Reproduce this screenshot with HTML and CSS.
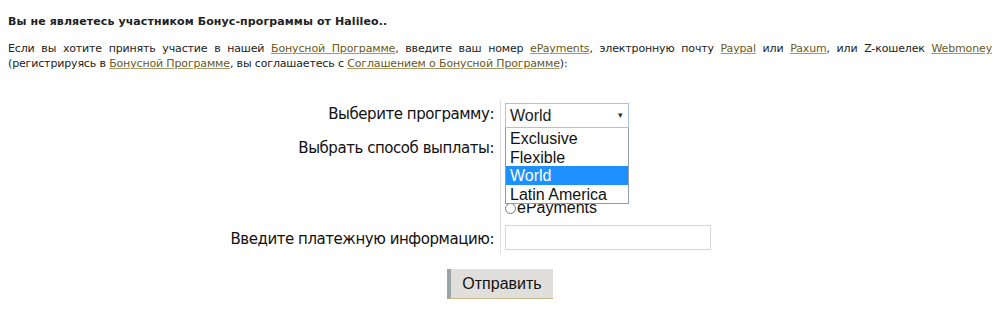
FILE: index.html
```html
<!DOCTYPE html>
<html lang="ru">

<head>
    <meta charset="UTF-8">
    <title>Бонус-программа</title>
    <link rel="stylesheet" href="styles.css">
</head>

<body>
    <h3 class="title">Вы не являетесь участником Бонус-программы от Halileo..</h3>

    <p class="intro">Если вы хотите принять участие в нашей <a href="#">Бонусной Программе</a>, введите ваш номер
        <a href="#">ePayments</a>, электронную почту <a href="#">Paypal</a> или <a href="#">Paxum</a>, или Z-кошелек
        <a href="#">Webmoney</a> (регистрируясь в <a href="#">Бонусной Программе</a>, вы соглашаетесь с
        <a href="#">Соглашением о Бонусной Программе</a>):</p>

    <form class="bonus-form">
        <div class="form-table">
            <label class="cell-label row-program" for="program">Выберите программу:</label>
            <div class="cell-field row-program">
                <div class="select-wrap">
                    <div class="fake-select" id="program">World<span class="arrow">▾</span></div>
                    <ul class="dropdown">
                        <li>Exclusive</li>
                        <li>Flexible</li>
                        <li class="selected">World</li>
                        <li>Latin America</li>
                    </ul>
                </div>
            </div>

            <div class="cell-label row-method">Выбрать способ выплаты:</div>
            <div class="cell-field row-method">
                <label class="radio"><input type="radio" name="method">ePayments</label>
            </div>

            <label class="cell-label row-info" for="info">Введите платежную информацию:</label>
            <div class="cell-field row-info">
                <input type="text" id="info" class="text-input">
            </div>
        </div>

        <div class="actions">
            <button type="submit">Отправить</button>
        </div>
    </form>
</body>

</html>
```

FILE: styles.css
```css
body {
    margin: 8px;
    font-family: Tahoma, "DejaVu Sans", sans-serif;
    color: #222;
    background: white;
}

.title {
    font-size: 11px;
    font-weight: bold;
    letter-spacing: 0.1px;
    margin: 6px 0 0;
    line-height: 15px;
}

.intro {
    font-size: 11px;
    letter-spacing: -0.15px;
    line-height: 15px;
    text-align: justify;
    margin: 12px 0 0;
}

.intro a {
    color: #6b5a22;
    text-decoration-color: #a89868;
}

.bonus-form {
    margin-top: 29px;
    font-size: 16px;
}

.form-table {
    display: grid;
    grid-template-columns: 1fr 1fr;
}

.cell-label {
    text-align: right;
    padding-right: 6px;
    font-size: 15px;
    letter-spacing: -0.45px;
    color: #111;
}

.cell-field {
    border-left: 1px solid #dcdcdc;
    padding-left: 4px;
}

.row-program {
    padding-top: 3px;
    height: 28px;
}

.cell-label.row-program {
    padding-top: 5px;
    height: 26px;
}

.cell-field.row-method {
    padding-top: 67px;
    height: 27px;
}

.cell-label.row-method {
    padding-top: 8px;
    height: 86px;
}

.row-info {
    height: 29px;
}

.cell-label.row-info {
    padding-top: 5px;
    height: 24px;
}

.select-wrap {
    position: relative;
    width: 124px;
}

.fake-select {
    box-sizing: border-box;
    height: 25px;
    border: 1px solid #a7c4e8;
    padding: 2px 4px;
    font-family: "Liberation Sans", Arial, sans-serif;
    font-size: 16px;
    line-height: 20px;
    position: relative;
    background: white;
}

.arrow {
    position: absolute;
    right: 5px;
    top: 1px;
    font-size: 9px;
    color: #333;
}

.dropdown {
    position: absolute;
    top: 25px;
    left: 0;
    width: 124px;
    box-sizing: border-box;
    margin: 0;
    padding: 1px 0 0;
    list-style: none;
    border: 1px solid #8f9bb0;
    border-top: none;
    background: white;
    font-family: "Liberation Sans", Arial, sans-serif;
    font-size: 16px;
    z-index: 2;
}

.dropdown li {
    height: 18.5px;
    line-height: 19px;
    padding-left: 4px;
    color: #111;
}

.dropdown li.selected {
    background: #1e90ff;
    color: white;
}

.radio {
    display: flex;
    align-items: center;
    height: 20px;
    font-family: "Liberation Sans", Arial, sans-serif;
    font-size: 16px;
    color: #111;
}

.radio input {
    margin: 0 1px 0 0;
    width: 11px;
    height: 11px;
}

.text-input {
    box-sizing: border-box;
    width: 206px;
    height: 25px;
    border: 1px solid #d4d8dc;
    margin: 0;
    font-size: 15px;
}

.actions {
    text-align: center;
    margin-top: 15px;
}

button {
    width: 106px;
    height: 30px;
    padding: 0;
    background: #e1dfdc;
    border: none;
    border-left: 4px solid #9aa3a5;
    border-bottom: 1px solid #c6b889;
    font-family: "Liberation Sans", Arial, sans-serif;
    font-size: 16px;
    color: #111;
    cursor: pointer;
}
```
